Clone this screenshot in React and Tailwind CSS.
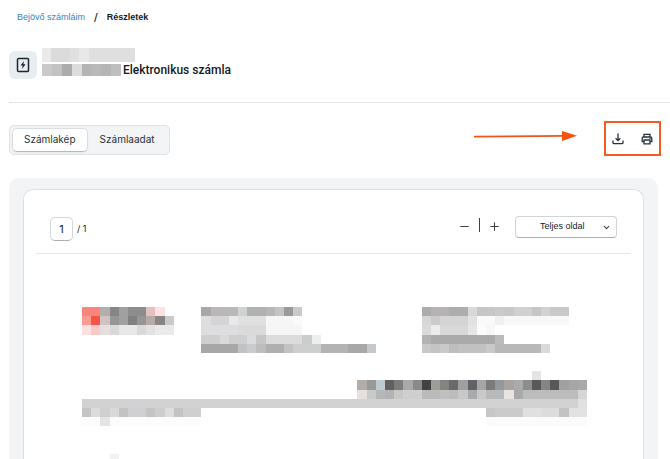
import React, { useState } from "react";
import { ChevronDown, Minus, Plus } from "lucide-react";

// Redacted areas: each run starts at column x / row y, cells are [color, span]
const SENDER_TOP = [
  { x: 0, y: 0, cells: [["#eaeaea", 1], ["#dbdbdb", 2], ["#e0e0e0", 1], ["#e8e8e8", 1], ["#dfdfdf", 5]] },
];

const SENDER_BOTTOM = [
  {
    x: 0,
    y: 0,
    cells: [["#c9c9c9", 1], ["#c2c2c2", 1], ["#acacac", 1], ["#dcdcdc", 1], ["#b4b4b4", 1], ["#b9b9b9", 1], ["#b5b5b5", 1], ["#bebebe", 1]],
  },
];

const INVOICE = [
  // supplier logo
  { x: 0, y: 0, cells: [["#f9857c", 2], ["#b3adad", 1], ["#868686", 1], ["#a0a0a0", 1], ["#8d8d8d", 2], ["#e6bfbf", 1], ["#fde2e1", 1]] },
  { x: 0, y: 1, cells: [["#fa9b94", 1], ["#f0554a", 1], ["#cfc2c2", 1], ["#969696", 1], ["#a0a0a0", 1], ["#808080", 1], ["#969696", 1], ["#b5a9a9", 1], ["#8a8482", 1], ["#cacaca", 1]] },
  { x: 0, y: 2, cells: [["#fcdfde", 1], ["#fac9c7", 1], ["#e6dfdf", 1], ["#d9d9d9", 1], ["#e8e8e8", 2], ["#dadada", 1], ["#e2e2e2", 1], ["#eaeaea", 2]] },
  // supplier address
  { x: 13, y: 0, cells: [["#a8a8a8", 1], ["#b9b7b8", 3], ["#d0d2d3", 1], ["#b0b1b1", 2], ["#b8b6b6", 1], ["#c4c4c4", 1], ["#989a9c", 1], ["#cacaca", 1]] },
  { x: 13, y: 1, cells: [["#dedede", 1], ["#d6d4d6", 2], ["#e9e9e9", 1], ["#e0e1e1", 3], ["#f6f6f6", 3], ["#fafafa", 1]] },
  { x: 13, y: 2, cells: [["#dedddf", 4], ["#dadada", 3], ["#f6f6f6", 4]] },
  { x: 13, y: 3, cells: [["#d0cfd0", 2], ["#dadada", 1], ["#cfcfcf", 2], ["#dcdcdc", 1], ["#c6c6c6", 1], ["#dcdcdc", 4], ["#c9cdce", 1], ["#eeeeee", 1]] },
  { x: 13, y: 4, cells: [["#a7a7a7", 4], ["#bfc3c6", 1], ["#cbcbcb", 1], ["#bdbdbd", 1], ["#afafaf", 2], ["#c2c2c2", 1], ["#cecece", 3], ["#b3b3b3", 3], ["#a8a8a8", 2], ["#c6c9cc", 1]] },
  // customer address
  { x: 37, y: 0, cells: [["#acacac", 1], ["#b4b2b2", 2], ["#adadad", 2], ["#d9d9d9", 1], ["#c6c6c6", 2], ["#cbc9c9", 1], ["#c8c8c8", 1], ["#d0d0d0", 2], ["#c6c6c6", 1], ["#d2d2d2", 1], ["#c9c9c9", 2]] },
  { x: 37, y: 1, cells: [["#d7d7d7", 1], ["#cacaca", 1], ["#d4d4d4", 3], ["#e2e2e2", 1], ["#fafafa", 2], ["#f0f0f0", 1], ["#f8f8f8", 7]] },
  { x: 37, y: 2, cells: [["#dadada", 1], ["#ececec", 1], ["#d8d8d8", 3], ["#e6e6e6", 1], ["#fcfcfc", 1], ["#f7f7f7", 1]] },
  { x: 37, y: 3, cells: [["#b3b3b3", 1], ["#aaaaaa", 7], ["#bbbbbb", 1]] },
  { x: 37, y: 4, cells: [["#cac8c8", 1], ["#c4c4c4", 1], ["#c9c9c9", 1], ["#bdbdbd", 1], ["#c1c1c1", 3], ["#cac8c8", 1], ["#b8b8b8", 5], ["#dadada", 1]] },
  // invoice table
  { x: 49, y: 7, cells: [["#e4e4e4", 1]] },
  {
    x: 30,
    y: 8,
    cells: [
      ["#b3adaa", 1], ["#989a98", 1], ["#bfcad0", 1], ["#606060", 1], ["#7c7c7a", 1], ["#a9a9a9", 1], ["#8a8a89", 1], ["#424242", 1], ["#9c9c9c", 1],
      ["#84847f", 1], ["#6a6a69", 1], ["#a0a0a0", 1], ["#5f6368", 1], ["#a5a6a6", 1], ["#7b7b7b", 1], ["#92989c", 1], ["#a8a3a0", 1], ["#a9abac", 1],
      ["#8b8e8e", 1], ["#585858", 1], ["#858684", 1], ["#585957", 1], ["#9fa0a0", 1], ["#a5a6a7", 1], ["#a9a9a9", 1],
    ],
  },
  {
    x: 30,
    y: 9,
    cells: [
      ["#e6e1df", 1], ["#c9c9c9", 1], ["#b5b7b9", 1], ["#b3b3b3", 1], ["#c8c8c8", 1], ["#cfcfcf", 2], ["#bababa", 2], ["#c0c0c0", 1], ["#bcbcbc", 1],
      ["#c8c8c8", 1], ["#a8aaac", 1], ["#c9c9c9", 1], ["#b9b9b9", 1], ["#b6babd", 1], ["#e8e4e0", 1], ["#a9a9a9", 1], ["#bcbcbc", 6], ["#d6d6d6", 1],
    ],
  },
  { x: 0, y: 10, cells: [["#d2d2d2", 54], ["#e1e1e1", 1]] },
  { x: 0, y: 11, cells: [["#c4c4c4", 1], ["#dcdcdf", 1], ["#cfcfcf", 1], ["#d9d9d9", 1], ["#c2c3c5", 1], ["#d0d0d2", 2], ["#c4c4c4", 1], ["#cdcdd0", 1], ["#dedee0", 1], ["#c3c3c3", 1], ["#cfcfd1", 2]] },
  { x: 44, y: 11, cells: [["#c6c6c6", 1], ["#cbcbcb", 3], ["#e0e0e0", 2], ["#dcdcdc", 2], ["#c3c3c3", 1], ["#e2e2e2", 2]] },
  { x: 0, y: 12, cells: [["#fcfcfc", 2], ["#e4e4e4", 1], ["#fcfcfc", 10]] },
  { x: 44, y: 12, cells: [["#fbfbfb", 11]] },
  { x: 3, y: 16, cells: [["#f2f2f2", 1]] },
];

function Mosaic({ runs, cols, rows, className }) {
  return (
    <svg viewBox={`0 0 ${cols} ${rows}`} preserveAspectRatio="none" shapeRendering="crispEdges" aria-hidden="true" className={className}>
      {runs.map((run, i) => {
        let x = run.x;
        return run.cells.map(([color, span], j) => {
          const start = x;
          x += span;
          return <rect key={`${i}_${j}`} x={start} y={run.y} width={span} height={1} fill={color} />;
        });
      })}
    </svg>
  );
}

function MeterIcon() {
  return (
    <svg viewBox="0 0 14 16" className="h-4 w-3.5" aria-hidden="true">
      <rect x="1.5" y="1.5" width="11" height="13" rx="1" fill="none" stroke="#1c2733" strokeWidth="1.5" />
      <path d="M8 4 4.5 8.6h2.2L6 12l3.6-4.8H7.4Z" fill="#1c2733" />
    </svg>
  );
}

function DownloadIcon() {
  return (
    <svg viewBox="0 0 12 12" className="size-3" fill="none" stroke="#26323a" strokeWidth="1.3" aria-hidden="true">
      <path d="M6 .5v7M3.6 5.2 6 7.6l2.4-2.4" />
      <path d="M1 7.5v2.2q0 1 1 1h8q1 0 1-1V7.5" />
    </svg>
  );
}

function PrintIcon() {
  return (
    <svg viewBox="0 0 12 12" className="size-3" fill="none" stroke="#26323a" strokeWidth="1.3" aria-hidden="true">
      <path d="M3 4V1.3h6V4" />
      <path d="M3 8.6H1.2V5.4q0-1.4 1.4-1.4h6.8q1.4 0 1.4 1.4v3.2H9" />
      <path d="M3 7h6v3.8H3z" />
      <path d="M8.4 5.5h1.2" strokeWidth="1" />
    </svg>
  );
}

export default function App() {
  const [tab, setTab] = useState("kep");
  const [page, setPage] = useState("1");

  const tabClass = (name) =>
    `h-6 rounded-[5px] px-[11px] text-[10px] text-[#26323a] ${
      tab === name ? "bg-white border border-[#dadee2] border-b-[#b4babf] shadow-xs" : "border border-transparent"
    }`;

  return (
    <div className="flex h-screen flex-col overflow-hidden bg-white pl-[9px] font-['Inter',sans-serif] text-[#14191f]">
      <nav className="flex h-[35px] shrink-0 items-center gap-[9px] pl-2 font-['Liberation_Sans',sans-serif] text-[9px]">
        <a href="#szamlak" className="text-[#3b7fc4]">Bejövő számláim</a>
        <span className="text-[13px]">/</span>
        <span className="font-bold">Részletek</span>
      </nav>

      <header className="flex h-[68px] shrink-0 items-start gap-[5px] border-b border-[#e2e4e6] pt-[13px]">
        <div className="mt-[3px] flex size-7 items-center justify-center rounded-md bg-[#e8edef]">
          <MeterIcon />
        </div>
        <div>
          <Mosaic runs={SENDER_TOP} cols={10} rows={1} className="h-[14px] w-[93px]" />
          <div className="mt-0.5 flex items-center gap-0.5">
            <Mosaic runs={SENDER_BOTTOM} cols={8} rows={1} className="h-3 w-[79px]" />
            <h1 className="font-['Roboto',sans-serif] text-[12px] leading-3 font-medium">Elektronikus számla</h1>
          </div>
        </div>
      </header>

      <div className="mt-[18px] flex shrink-0 items-center pr-[9px]">
        <div className="mt-0.5 mr-auto flex rounded-[5px] border border-[#dfe2e5] bg-[#f3f4f6] p-0.5">
          <button type="button" className={tabClass("kep")} onClick={() => setTab("kep")}>Számlakép</button>
          <button type="button" className={tabClass("adat")} onClick={() => setTab("adat")}>Számlaadat</button>
        </div>
        <svg viewBox="0 0 104 12" className="mr-[26px] mb-1.5 h-3 w-[104px]" aria-hidden="true">
          <path d="M0 6.6 90 5.8" stroke="#f0561a" strokeWidth="1.8" />
          <path d="M88 1 103 5.8 88 11Z" fill="#fa500a" />
        </svg>
        <div className="flex h-[35px] items-center gap-[17px] border-2 border-[#f55a20] px-1.5">
          <button type="button" aria-label="Letöltés" className="flex size-3 justify-center"><DownloadIcon /></button>
          <button type="button" aria-label="Nyomtatás" className="flex size-3 justify-center"><PrintIcon /></button>
        </div>
      </div>

      <main className="mt-[22px] mr-3 flex grow flex-col rounded-t-[10px] bg-[#f3f4f6] px-3.5 pt-[11px]">
        <div className="grow rounded-t-[10px] border border-b-0 border-[#dde0e3] bg-white px-3">
          <div className="flex h-16 items-center border-b border-[#e4e6e8] pt-3 pr-3.5 pl-3.5">
            <label className="flex items-center gap-1 pt-0.5 text-[9px]">
              <input
                value={page}
                onChange={(e) => setPage(e.target.value)}
                aria-label="Oldal"
                className="h-6 w-[23px] rounded-[5px] border border-[#d3d7da] border-b-[#a9afb4] text-center text-[11px]"
              />
              / 1
            </label>
            <div className="mr-3.5 mb-0.5 ml-auto flex items-center gap-2">
              <button type="button" aria-label="Kicsinyítés"><Minus size={13} strokeWidth={2} color="#3a4248" /></button>
              <span className="mb-1 h-3.5 w-px bg-[#3a4248]" />
              <button type="button" aria-label="Nagyítás"><Plus size={13} strokeWidth={2} color="#3a4248" /></button>
            </div>
            <div className="relative mb-0.5">
              <select
                aria-label="Nagyítás mértéke"
                className="block h-[22px] w-[102px] appearance-none rounded-sm border border-[#cfd4d7] border-b-[#a9afb4] bg-white pl-6 font-['Liberation_Sans',sans-serif] text-[9px] font-medium"
              >
                <option>Teljes oldal</option>
              </select>
              <ChevronDown size={9} strokeWidth={3} color="#3a4248" className="pointer-events-none absolute top-[7px] right-1.5" />
            </div>
          </div>
          <div className="pt-[53px] pr-11 pl-[46px]">
            <Mosaic runs={INVOICE} cols={55} rows={17} className="w-full" />
          </div>
        </div>
      </main>
    </div>
  );
}
